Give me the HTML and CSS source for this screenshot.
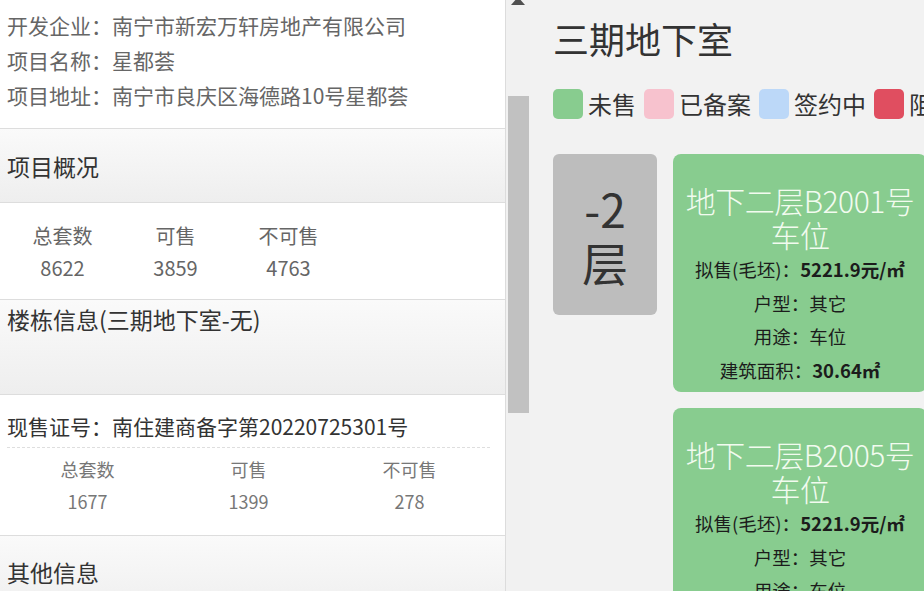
FILE: index.html
```html
<!DOCTYPE html>
<html lang="zh-CN">
<head>
    <meta charset="UTF-8">
    <meta name="viewport" content="width=device-width, initial-scale=1.0">
    <title>三期地下室 - 星都荟</title>
    <link rel="stylesheet" href="styles.css">
</head>
<body>
    <div class="page">
        <div class="side">
            <div class="info">
                <p>开发企业：南宁市新宏万轩房地产有限公司</p>
                <p>项目名称：星都荟</p>
                <p>项目地址：南宁市良庆区海德路10号星都荟</p>
            </div>

            <div class="section-head">项目概况</div>
            <div class="summary">
                <div class="stat"><span>总套数</span><span>8622</span></div>
                <div class="stat"><span>可售</span><span>3859</span></div>
                <div class="stat"><span>不可售</span><span>4763</span></div>
            </div>

            <div class="section-head building">楼栋信息(三期地下室-无)</div>
            <div class="permit">
                <p class="permit-no">现售证号：南住建商备字第20220725301号</p>
                <div class="permit-stats">
                    <div class="stat"><span>总套数</span><span>1677</span></div>
                    <div class="stat"><span>可售</span><span>1399</span></div>
                    <div class="stat"><span>不可售</span><span>278</span></div>
                </div>
            </div>

            <div class="section-head other">其他信息</div>
        </div>

        <div class="scrollbar">
            <div class="scroll-arrow"></div>
            <div class="scroll-thumb"></div>
        </div>

        <div class="main">
            <h1>三期地下室</h1>

            <div class="legend">
                <span class="swatch unsold"></span><span>未售</span>
                <span class="swatch filed"></span><span>已备案</span>
                <span class="swatch signing"></span><span>签约中</span>
                <span class="swatch blocked"></span><span>阻止</span>
            </div>

            <div class="floor">
                <div class="floor-label">
                    <span>-2</span>
                    <span>层</span>
                </div>
                <div class="units">
                    <div class="unit">
                        <div class="unit-name">地下二层B2001号车位</div>
                        <p>拟售(毛坯)：<b>5221.9元/㎡</b></p>
                        <p>户型：其它</p>
                        <p>用途：车位</p>
                        <p>建筑面积：<b>30.64㎡</b></p>
                    </div>
                    <div class="unit">
                        <div class="unit-name">地下二层B2005号车位</div>
                        <p>拟售(毛坯)：<b>5221.9元/㎡</b></p>
                        <p>户型：其它</p>
                        <p>用途：车位</p>
                        <p>建筑面积：<b>30.64㎡</b></p>
                    </div>
                </div>
            </div>
        </div>
    </div>
</body>
</html>
```

FILE: styles.css
```css
body {
    margin: 0;
    font-family: "Noto Sans CJK SC", "Noto Sans", sans-serif;
    background: #f2f2f2;
    overflow: hidden;
}

p {
    margin: 0;
}

.page {
    display: flex;
    height: 591px;
    overflow: hidden;
}

/* left column */
.side {
    width: 505px;
    flex-shrink: 0;
    background: #fff;
    border-right: 1px solid #dcdcdc;
}

.info {
    padding: 8px 7px 15px;
    font-size: 21px;
    line-height: 35px;
    color: #666;
    border-bottom: 1px solid #dddddd;
}

.section-head {
    height: 73px;
    padding: 0 7px;
    display: flex;
    align-items: center;
    font-size: 23px;
    color: #333;
    background: linear-gradient(#fafafa, #eeeeee);
    border-bottom: 1px solid #dddddd;
}

.section-head.building {
    height: 95px;
    align-items: flex-start;
    padding-top: 4px;
    box-sizing: border-box;
    line-height: 30px;
}

.section-head.other {
    height: 60px;
    align-items: flex-start;
    padding-top: 21px;
    line-height: 30px;
    border-bottom: none;
}

.stat {
    display: flex;
    flex-direction: column;
    align-items: center;
}

.summary {
    display: grid;
    grid-template-columns: repeat(3, 113px);
    padding: 17px 6px 15px;
    font-size: 20px;
    line-height: 32px;
    color: #666;
    border-bottom: 1px solid #dddddd;
}

.permit {
    padding: 15px 15px 18px 7px;
    border-bottom: 1px solid #dddddd;
}

.permit-no {
    font-size: 21px;
    line-height: 32px;
    color: #333;
    padding-bottom: 5px;
    border-bottom: 1px dashed #dedede;
}

.permit-stats {
    display: grid;
    grid-template-columns: repeat(3, 1fr);
    margin-top: 5px;
    font-size: 18px;
    line-height: 32px;
    color: #777;
}

/* fake scrollbar of the left column */
.scrollbar {
    width: 24px;
    flex-shrink: 0;
    background: #f1f1f1;
    display: flex;
    flex-direction: column;
    align-items: center;
}

.scroll-arrow {
    width: 0;
    height: 0;
    margin-top: -3px;
    border-left: 7px solid transparent;
    border-right: 7px solid transparent;
    border-bottom: 8px solid #505050;
}

.scroll-thumb {
    width: 21px;
    height: 317px;
    margin-top: 91px;
    background: #c1c1c1;
}

/* right area */
.main {
    flex: 1;
    min-width: 0;
    padding: 14px 0 0 23px;
    background: #f2f2f2;
}

h1 {
    margin: 0;
    font-size: 36px;
    line-height: 48px;
    font-weight: normal;
    color: #333;
}

.legend {
    display: flex;
    align-items: center;
    margin-top: 27px;
    font-size: 24px;
    line-height: 30px;
    color: #333;
    white-space: nowrap;
}

.swatch {
    width: 30px;
    height: 30px;
    flex-shrink: 0;
    border-radius: 5px;
    margin-right: 5px;
}

.swatch + span {
    flex-shrink: 0;
    margin-right: 8px;
}

.unsold { background: #88cc8f; }
.filed { background: #f7c2ce; }
.signing { background: #bcd8f8; }
.blocked { background: #e04e60; }

.floor {
    display: flex;
    align-items: flex-start;
    gap: 16px;
    margin-top: 35px;
}

.floor-label {
    width: 104px;
    height: 161px;
    flex-shrink: 0;
    display: flex;
    flex-direction: column;
    align-items: center;
    justify-content: center;
    font-size: 46px;
    line-height: 53px;
    color: #333;
    background: #bdbdbd;
    border-radius: 6px;
}

.units {
    display: flex;
    flex-direction: column;
    gap: 16px;
}

.unit {
    width: 254px;
    flex-shrink: 0;
    box-sizing: border-box;
    padding: 29px 10px 5px;
    background: #88cc8f;
    border-radius: 8px;
    text-align: center;
    color: #1c1c1c;
    font-size: 18.5px;
    line-height: 33.5px;
}

.unit-name {
    font-size: 30px;
    line-height: 34px;
    font-weight: 300;
    color: #f2fbef;
    letter-spacing: -0.5px;
    margin-bottom: 2px;
}

.unit b {
    font-weight: 600;
}
```
